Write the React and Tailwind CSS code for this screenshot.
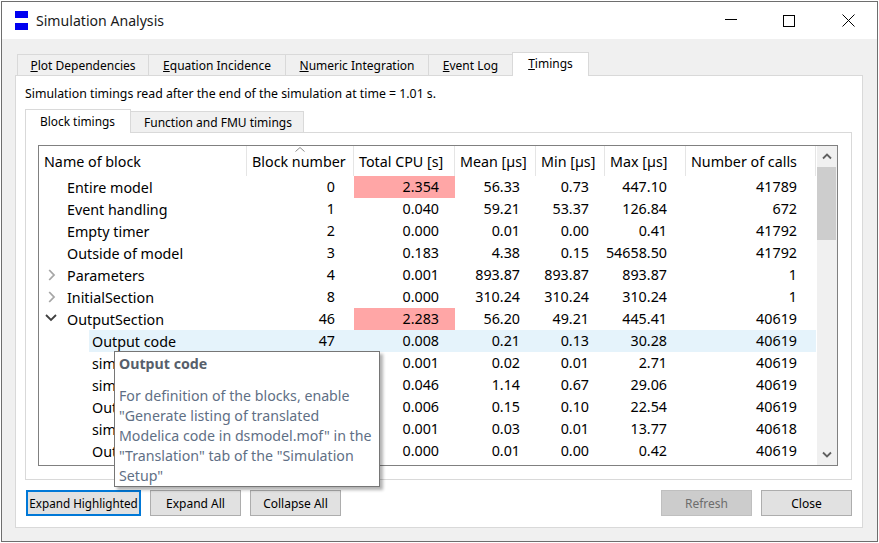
import React from "react";

const cols = [
  { w: "w-[207px]", c: "" },
  { w: "w-[108px]", c: "pr-[19px] text-right" },
  { w: "w-[101px]", c: "pr-[16px] text-right" },
  { w: "w-[80px]", c: "pr-[15px] text-right" },
  { w: "w-[69px]", c: "pr-[15px] text-right" },
  { w: "w-[81px]", c: "pr-[18px] text-right" },
  { w: "w-[131px]", c: "pr-[19px] text-right" },
];
const headers = [
  ["Name of block", "w-[208px]"],
  ["Block number", "w-[107px]"],
  ["Total CPU [s]", "w-[101px]"],
  ["Mean [µs]", "w-[81px]"],
  ["Min [µs]", "w-[69px]"],
  ["Max [µs]", "w-[81px]"],
  ["Number of calls", "w-[130px]"],
];
const rows = [
  ["Entire model", 1, "", "0", "2.354", "56.33", "0.73", "447.10", "41789", true],
  ["Event handling", 1, "", "1", "0.040", "59.21", "53.37", "126.84", "672"],
  ["Empty timer", 1, "", "2", "0.000", "0.01", "0.00", "0.41", "41792"],
  ["Outside of model", 1, "", "3", "0.183", "4.38", "0.15", "54658.50", "41792"],
  ["Parameters", 1, "r", "4", "0.001", "893.87", "893.87", "893.87", "1"],
  ["InitialSection", 1, "r", "8", "0.000", "310.24", "310.24", "310.24", "1"],
  ["OutputSection", 1, "d", "46", "2.283", "56.20", "49.21", "445.41", "40619", true],
  ["Output code", 2, "", "47", "0.008", "0.21", "0.13", "30.28", "40619"],
  ["sim", 2, "", "", "0.001", "0.02", "0.01", "2.71", "40619"],
  ["sim", 2, "", "", "0.046", "1.14", "0.67", "29.06", "40619"],
  ["Out", 2, "", "", "0.006", "0.15", "0.10", "22.54", "40619"],
  ["sim", 2, "", "", "0.001", "0.03", "0.01", "13.77", "40618"],
  ["Out", 2, "", "", "0.000", "0.01", "0.00", "0.42", "40619"],
];

function Tab({ u, rest, active, w, first }) {
  return (
    <div className={`${w} ${active ? "h-[24px] bg-white z-10 mb-[-1px] pb-[1px]" : "h-[21px] bg-[#f0f0f0] pt-[1px]"} ${first ? "" : "ml-[-1px]"} border border-b-0 border-[#d9d9d9] flex items-center justify-center text-[12px] text-black`}>
      <span><span className="underline">{u}</span>{rest}</span>
    </div>
  );
}

function Button({ children, className = "" }) {
  return (
    <div className={`h-[26px] w-[91px] pt-[1px] flex items-center justify-center text-[12px] border ${className}`}>{children}</div>
  );
}

function Row({ r, idx }) {
  const [name, level, chev, ...rest] = r;
  const vals = rest.slice(0, 6);
  const hot = rest[6];
  const selected = idx === 7;
  return (
    <div className="flex h-[22px] relative text-[14.3px] text-black leading-[22px] shrink-0">
      {selected && <div className="absolute left-[50px] right-0 top-0 bottom-0 bg-[#e5f3fb]" />}
      <div className={`${cols[0].w} relative leading-[24px] ${level === 2 ? "pl-[53px]" : "pl-[28px]"}`}>
        {chev === "r" && (
          <svg width="8" height="12" viewBox="0 0 8 12" className="absolute left-[9px] top-[5px]">
            <path d="M1.2 1L6 6L1.2 11" fill="none" stroke="#a6a6a6" strokeWidth="1.8" />
          </svg>
        )}
        {chev === "d" && (
          <svg width="12" height="8" viewBox="0 0 12 8" className="absolute left-[6px] top-[6px]">
            <path d="M1 1L6 6L11 1" fill="none" stroke="#404040" strokeWidth="1.8" />
          </svg>
        )}
        {name}
      </div>
      {vals.map((v, i) => (
        <div key={i} className={`${cols[i + 1].w} ${cols[i + 1].c} relative ${i === 1 && hot ? "bg-[#ffa6a6]" : ""}`}>{v}</div>
      ))}
    </div>
  );
}

export default function App() {
  return (
    <div className="w-[879px] h-[543px] bg-white overflow-hidden p-px font-['Noto_Sans','Open_Sans',sans-serif]">
      <div className="w-[877px] h-[541px] border border-[#6e6e6e] bg-[#f0f0f0] flex flex-col">
        {/* Title bar */}
        <div className="h-[37px] bg-white flex items-center shrink-0">
          <svg width="13" height="19" viewBox="0 0 13 19" className="ml-[13px]">
            <rect x="0" y="0" width="13" height="7" fill="#0000f0" />
            <rect x="0" y="12" width="13" height="7" fill="#0000f0" />
          </svg>
          <span className="ml-[8px] text-[14.1px] text-[#1a1a1a]">Simulation Analysis</span>
          <div className="ml-auto flex items-center">
            <svg width="12" height="12" viewBox="0 0 12 12" className="mr-[46px]"><path d="M0 4.5H12" stroke="#000" strokeWidth="1" /></svg>
            <svg width="12" height="12" viewBox="0 0 12 12" className="mr-[47px]"><rect x="0.5" y="0.5" width="11" height="11" fill="none" stroke="#000" strokeWidth="1" /></svg>
            <svg width="13" height="13" viewBox="0 0 13 13" className="mr-[22px]"><path d="M0.5 0.5L12.5 12.5M12.5 0.5L0.5 12.5" stroke="#000" strokeWidth="1" /></svg>
          </div>
        </div>
        {/* Outer tabs */}
        <div className="flex items-end pl-[15px] mt-[13px] h-[23px] shrink-0 relative">
          <Tab first w="w-[132px]" u="P" rest="lot Dependencies" />
          <Tab w="w-[138px]" u="E" rest="quation Incidence" />
          <Tab w="w-[144px]" u="N" rest="umeric Integration" />
          <Tab w="w-[85px]" u="E" rest="vent Log" />
          <Tab w="w-[77px]" u="T" rest="imings" active />
        </div>
        {/* Outer panel */}
        <div className="mx-[13px] w-[848px] h-[453px] bg-white border border-[#d9d9d9] px-[9px] flex flex-col shrink-0 relative">
          <div className="text-[12.3px] text-black h-[34px] pt-[9px] leading-[17px] whitespace-nowrap">Simulation timings read after the end of the simulation at time = 1.01 s.</div>
          <div className="flex items-end h-[22px] shrink-0">
            <div className="w-[106px] h-[24px] pr-[1px] bg-white border border-[#d9d9d9] border-b-0 z-10 mb-[-1px] flex items-center justify-center text-[11.9px] text-black">Block timings</div>
            <div className="w-[174px] h-[21px] pt-[1px] pl-[2px] bg-[#f0f0f0] border border-[#d9d9d9] border-b-0 ml-[-1px] flex items-center justify-center text-[12px] text-black">Function and FMU timings</div>
          </div>
          {/* Inner panel */}
          <div className="w-[827px] h-[348px] border border-[#d9d9d9] pt-[12px] pl-[12px] shrink-0">
            <div className="w-[800px] h-[321px] border border-[#808080] flex overflow-hidden">
              <div className="w-[777px] flex flex-col shrink-0 overflow-hidden">
                <div className="flex h-[30px] shrink-0 text-[14.3px] text-black leading-[32px]">
                  {headers.map(([h, w], i) => (
                    <div key={h} className={`${w} pl-[5px] border-r border-[#e5e5e5] relative whitespace-nowrap`}>
                      {h}
                      {i === 1 && (
                        <svg width="10" height="5" viewBox="0 0 10 5" className="absolute left-[48px] top-[1px]"><path d="M0.5 4.5L5 0.5L9.5 4.5" fill="none" stroke="#8c8c8c" strokeWidth="1" /></svg>
                      )}
                    </div>
                  ))}
                </div>
                {rows.map((r, i) => <Row key={i} r={r} idx={i} />)}
              </div>
              <div className="flex-1 ml-px bg-[#f0f0f0] flex flex-col">
                <div className="h-[21px] w-full flex items-center justify-center shrink-0">
                  <svg width="10" height="7" viewBox="0 0 10 7"><path d="M1 5.5L5 1.5L9 5.5" fill="none" stroke="#606060" strokeWidth="1.8" /></svg>
                </div>
                <div className="w-[19px] h-[73px] bg-[#cdcdcd] shrink-0" />
                <div className="flex-1" />
                <div className="h-[21px] w-full flex items-center justify-center shrink-0">
                  <svg width="10" height="7" viewBox="0 0 10 7"><path d="M1 1.5L5 5.5L9 1.5" fill="none" stroke="#606060" strokeWidth="1.8" /></svg>
                </div>
              </div>
            </div>
          </div>
          {/* Buttons */}
          <div className="flex items-center mt-[10px] h-[26px] shrink-0">
            <div className="w-[115px] h-[26px] ml-[1px] pt-[1px] border-2 border-[#0078d7] bg-[#e1e1e1] flex items-center justify-center text-[11.7px] text-black whitespace-nowrap">Expand Highlighted</div>
            <Button className="ml-[9px] bg-[#e1e1e1] border-[#adadad] text-black">Expand All</Button>
            <Button className="ml-[9px] bg-[#e1e1e1] border-[#adadad] text-black">Collapse All</Button>
            <Button className="ml-[320px] bg-[#cccccc] border-[#bfbfbf] text-[#6d6d6d]">Refresh</Button>
            <Button className="ml-[9px] bg-[#e1e1e1] border-[#adadad] text-black">Close</Button>
          </div>
        </div>
        {/* Tooltip */}
        <div className="absolute left-[114px] top-[351px] w-[266px] h-[136px] bg-white border border-[#767676] shadow-[3px_3px_3px_rgba(0,0,0,0.3)] pl-[4px] z-20 text-[14.2px] leading-[20px] text-[#5f6f85] whitespace-nowrap">
          <div className="font-bold text-[#575f6b] mt-[2px] h-[20px]">Output code</div>
          <div className="mt-[12px]">
            For definition of the blocks, enable<br />
            "Generate listing of translated<br />
            Modelica code in dsmodel.mof" in the<br />
            "Translation" tab of the "Simulation<br />
            Setup"
          </div>
        </div>
      </div>
    </div>
  );
}
